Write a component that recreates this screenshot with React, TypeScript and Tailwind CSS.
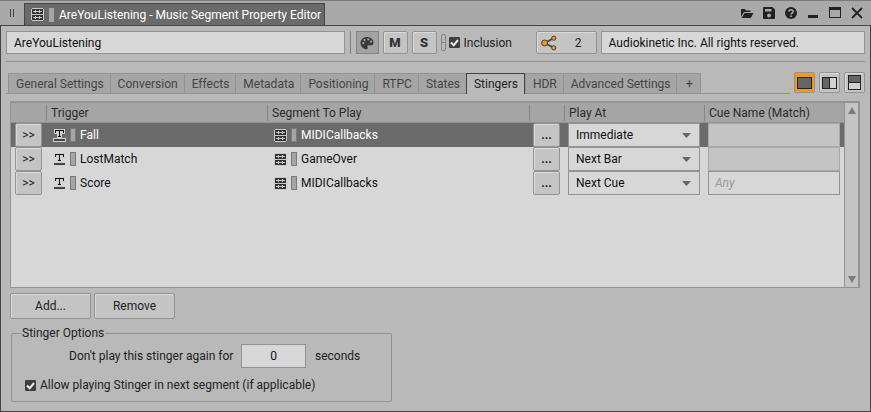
import type { InputHTMLAttributes, ReactNode } from "react";

type Stinger = {
  trigger: string;
  segment: string;
  playAt: string;
  cue?: string;
  selected?: boolean;
};

const stingers: Stinger[] = [
  { trigger: "Fall", segment: "MIDICallbacks", playAt: "Immediate", selected: true },
  { trigger: "LostMatch", segment: "GameOver", playAt: "Next Bar" },
  { trigger: "Score", segment: "MIDICallbacks", playAt: "Next Cue", cue: "Any" },
];

const tabs = [
  "General Settings",
  "Conversion",
  "Effects",
  "Metadata",
  "Positioning",
  "RTPC",
  "States",
  "Stingers",
  "HDR",
  "Advanced Settings",
  "+",
];

const playAtOptions = ["Immediate", "Next Grid", "Next Bar", "Next Beat", "Next Cue"];

const raised =
  "flex items-center justify-center rounded-xs border border-[#939393] bg-[#c4c4c4] shadow-[inset_1px_1px_0_#dadada]";

const field = "border border-[#939393] bg-[#d7d7d7] text-[#111] outline-none";

const SegmentIcon = () => (
  <svg width="13" height="13" viewBox="0 0 13 13" shapeRendering="crispEdges" className="shrink-0">
    <path d="M1 0h11v1h1v11h-1v1H1v-1H0V1h1z" fill="#c8c8c8" />
    <path d="M1 1h11v5H1zM1 7h11v5H1z" fill="#333" />
    <path
      d="M2 3h9v1H2zM4 2h1v3H4zM8 2h1v3H8zM2 9h9v1H2zM4 8h1v3H4zM8 8h1v3H8z"
      fill="#c8c8c8"
    />
  </svg>
);

const TriggerIcon = () => (
  <svg width="13" height="14" viewBox="0 0 13 14" shapeRendering="crispEdges" className="shrink-0">
    <path d="M1 1h11v5H9v4h4v4H0v-4h4V6H1z" fill="#d0d0d0" />
    <path d="M2 2h9v3h-1V3H7v5h1v1H5V8h1V3H3v2H2z" fill="#111" />
    <path d="M1 11h11v2H1z" fill="#444" />
  </svg>
);

const ColorChip = () => (
  <span className="h-[14px] w-[6px] shrink-0 border border-[#7b7b7b] bg-[#a5a5a5]" />
);

const ShareIcon = () => (
  <svg width="16" height="16" viewBox="0 0 16 16" className="shrink-0">
    <path d="M13 3 4 8l9 5" fill="none" stroke="#444" strokeWidth="1.8" />
    <g fill="#f09a1a" stroke="#4a4030" strokeWidth="1">
      <circle cx="3.6" cy="8" r="3" />
      <circle cx="12.8" cy="3.2" r="2.1" />
      <circle cx="12.8" cy="12.8" r="2.1" />
    </g>
  </svg>
);

const PaletteIcon = () => (
  <svg width="14" height="14" viewBox="0 0 14 14">
    <path
      fillRule="evenodd"
      fill="#3a3a3a"
      d="M7 1C3.300 1 .5 3.700 .5 7s2.800 6.300 6 6.300c1.100 0 1.500-.8 1.100-1.700C7 10.300 7.600 9.300 9 9.300h2.200c1.500 0 2.300-1 2.300-2.400C13.500 3.500 10.700 1 7 1zM3.300 6a1.100 1.100 0 1 0 0 2.200 1.100 1.100 0 0 0 0-2.200zM4.600 3a1.100 1.100 0 1 0 0 2.200 1.100 1.100 0 0 0 0-2.200zM8.200 2.200a1.100 1.100 0 1 0 0 2.200 1.100 1.100 0 0 0 0-2.200zM11 4.600a1.100 1.100 0 1 0 0 2.200 1.100 1.100 0 0 0 0-2.200z"
    />
  </svg>
);

const WindowButton = ({ label, children }: { label: string; children: ReactNode }) => (
  <button type="button" aria-label={label} className="flex size-[22px] items-center justify-center">
    <svg width="14" height="14" viewBox="0 0 14 14" fill="#222">
      {children}
    </svg>
  </button>
);

const Checkbox = (props: InputHTMLAttributes<HTMLInputElement>) => (
  <span className="grid shrink-0">
    <input
      type="checkbox"
      {...props}
      className="col-start-1 row-start-1 size-[11px] appearance-none rounded-[1px] bg-[#3f3f3f]"
    />
    <svg
      width="11"
      height="11"
      viewBox="0 0 11 11"
      className="pointer-events-none col-start-1 row-start-1"
    >
      <path d="M2 5.500 4.700 8.300 9 3" fill="none" stroke="#eee" strokeWidth="2" />
    </svg>
  </span>
);

const ToggleButton = ({ label, children }: { label: string; children: string }) => (
  <button
    type="button"
    aria-label={label}
    className={`${raised} h-[23px] w-[25px] text-[13px] font-black text-[#333]`}
  >
    {children}
  </button>
);

const Head = ({ children }: { children?: ReactNode }) => (
  <th className="h-5 border-b border-[#939393] bg-[#a5a5a5] p-0 text-left font-normal text-[#2b2b2b]">
    <div className="flex h-4 items-center border-l border-[#858585] pl-1">{children}</div>
  </th>
);

const Row = ({ trigger, segment, playAt, cue, selected }: Stinger) => (
  <tr className={selected ? "h-6 bg-[#6b6b6b] text-white" : "h-6 text-[#111]"}>
    <td className="p-0 pl-1">
      <button type="button" aria-label={`${trigger} menu`} className={`${raised} h-6 w-[27px] text-[#222]`}>
        &gt;&gt;
      </button>
    </td>
    <td className="p-0 pl-[7px]">
      <div className="flex items-center gap-1">
        <TriggerIcon />
        <ColorChip />
        <span>{trigger}</span>
      </div>
    </td>
    <td className="p-0 pl-[7px]">
      <div className="flex items-center gap-1">
        <SegmentIcon />
        <ColorChip />
        <span>{segment}</span>
      </div>
    </td>
    <td className="p-0 pl-1">
      <button
        type="button"
        aria-label={`Browse segment for ${trigger}`}
        className={`${raised} h-6 w-[27px] font-bold text-[#222]`}
      >
        ...
      </button>
    </td>
    <td className="p-0 pl-1">
      <div className="grid w-[132px] items-center">
        <select
          aria-label={`Play ${trigger} at`}
          defaultValue={playAt}
          className={`${field} col-start-1 row-start-1 h-6 appearance-none px-[7px]`}
        >
          {playAtOptions.map((option) => (
            <option key={option}>{option}</option>
          ))}
        </select>
        <svg
          width="9"
          height="5"
          viewBox="0 0 9 5"
          className="pointer-events-none col-start-1 row-start-1 mr-[9px] justify-self-end"
        >
          <path d="M0 0h9L4.500 5z" fill="#666" />
        </svg>
      </div>
    </td>
    <td className="p-0 pl-1">
      <input
        aria-label={`Cue name for ${trigger}`}
        placeholder={cue}
        disabled={!cue}
        className="block h-6 w-[132px] border border-[#939393] bg-[#d7d7d7] px-1.5 placeholder:text-[#999] placeholder:italic disabled:border-[#a9a9a9] disabled:bg-[#c4c4c4]"
      />
    </td>
  </tr>
);

const TitleBar = () => (
  <header className="flex h-[26px] items-end justify-between border-t border-b border-t-[#7b7b7b] border-b-[#444] bg-[#a9a9a9]">
    <div className="flex items-end">
      <div className="flex h-6 w-6 items-center gap-[2px] pl-[10px]">
        <span className="h-2 w-px bg-[#444]" />
        <span className="h-2 w-px bg-[#444]" />
      </div>
      <h1 className="flex h-[22px] w-[301px] items-center gap-[5px] border-x border-t border-[#444] bg-[#6a6a6a] pl-1.5 whitespace-nowrap text-white">
        <SegmentIcon />
        <span className="h-[14px] w-[5px] shrink-0 bg-[#a5a5a5]" />
        <span>AreYouListening - Music Segment Property Editor</span>
      </h1>
    </div>
    <div className="flex pr-[3px] pb-px">
      <WindowButton label="Open">
        <path d="M1 3h4l1 1.500h4.500V6H4L1 10.500zM4.600 7H13.500L10.800 12H1.500z" />
      </WindowButton>
      <WindowButton label="Save">
        <path
          fillRule="evenodd"
          d="M2 1h8.500L13 3.500V12a1 1 0 0 1-1 1H2a1 1 0 0 1-1-1V2a1 1 0 0 1 1-1zM3 3v2.500h6.500V3zM7 7.500a2 2 0 1 0 0 4 2 2 0 0 0 0-4z"
        />
      </WindowButton>
      <WindowButton label="Help">
        <circle cx="7" cy="7" r="6" />
        <path d="M5 5.800C5 3.200 9.100 3.300 9.100 5.600 9.100 7 7.100 7.100 7.100 8.600" fill="none" stroke="#aaa" strokeWidth="1.500" />
        <path d="M6.300 9.600h1.600v1.500H6.300z" fill="#aaa" />
      </WindowButton>
      <WindowButton label="Minimize">
        <path d="M2 9h10v3H2z" />
      </WindowButton>
      <WindowButton label="Maximize">
        <path fillRule="evenodd" d="M1 1h12v11H1zM2 4v7h10V4z" />
      </WindowButton>
      <WindowButton label="Close">
        <path d="M2 2l10 10M12 2l-10 10" stroke="#222" strokeWidth="1.800" />
      </WindowButton>
    </div>
  </header>
);

const Toolbar = () => (
  <div className="mx-[5px] flex items-center border-b border-[#939393] pt-[5px] pb-[7px]">
    <input aria-label="Name" defaultValue="AreYouListening" className={`${field} h-[23px] min-w-0 flex-[322] px-[7px]`} />
    <span className="mx-[5px] h-[23px] w-px bg-[#7f7f7f]" />
    <button
      type="button"
      aria-label="Color"
      className="mr-1 flex h-[23px] w-[23px] items-center justify-center border border-[#858585] bg-[#a2a2a2]"
    >
      <PaletteIcon />
    </button>
    <div className="flex gap-1">
      <ToggleButton label="Mute">M</ToggleButton>
      <ToggleButton label="Solo">S</ToggleButton>
    </div>
    <span className="mr-[3px] ml-1 flex h-[17px] w-[5px] flex-col justify-center rounded-xs border border-[#858585]">
      <span className="h-px bg-[#858585]" />
    </span>
    <label className="flex w-[87px] items-center gap-1 text-[#222]">
      <Checkbox defaultChecked />
      Inclusion
    </label>
    <button type="button" aria-label="References" className={`${raised} h-[23px] w-[61px] justify-start pl-1 text-[#222]`}>
      <ShareIcon />
      <span className="flex-1 pl-1">2</span>
    </button>
    <input
      aria-label="Notes"
      defaultValue="Audiokinetic Inc. All rights reserved."
      className={`${field} ml-1 h-[23px] min-w-0 flex-[248] px-[7px]`}
    />
  </div>
);

const TabBar = () => (
  <div className="flex items-end justify-between px-[5px] pt-[10px]">
    <div role="tablist" className="mr-1 flex flex-1 border-b border-[#939393] pl-[2px]">
      {tabs.map((tab) => (
        <button
          key={tab}
          type="button"
          role="tab"
          aria-selected={tab === "Stingers"}
          className={
            tab === "Stingers"
              ? "-mb-px h-[21px] border-x border-t border-[#444] bg-[#b9b9b9] pr-1.5 pl-[7px] text-[#222]"
              : "h-5 border-t border-l border-[#939393] bg-[#a5a5a5] pr-1.5 pl-[7px] text-[#444] last:w-[25px] last:border-r"
          }
        >
          {tab}
        </button>
      ))}
    </div>
    <div className="mb-px flex gap-1">
      <button
        type="button"
        aria-label="Single view"
        className="flex size-[21px] items-center justify-center rounded-xs border border-[#939393] bg-[#f39c12]"
      >
        <span className="h-3 w-[15px] border border-[#222] bg-[#666]" />
      </button>
      <button type="button" aria-label="Split vertically" className={`${raised} size-[21px]`}>
        <span className="flex h-3 w-[15px] border border-[#222]">
          <span className="flex-1 border-r border-[#222] bg-[#666]" />
          <span className="w-[6px] bg-[#d0d0d0]" />
        </span>
      </button>
      <button type="button" aria-label="Split horizontally" className={`${raised} size-[21px]`}>
        <span className="flex h-[15px] w-[13px] flex-col border border-[#222]">
          <span className="flex-1 border-b border-[#222] bg-[#666]" />
          <span className="h-[6px] bg-[#d0d0d0]" />
        </span>
      </button>
    </div>
  </div>
);

const StingerList = () => (
  <div className="mt-[7px] mr-[10px] ml-[9px] flex min-h-[187px] border-t-2 border-r-2 border-b border-l border-[#939393] bg-[#d7d7d7]">
    <div className="flex-1">
      <table className="w-full table-fixed border-separate border-spacing-0">
        <colgroup>
          <col className="w-[35px]" />
          <col className="w-[221px]" />
          <col />
          <col className="w-[35px]" />
          <col className="w-[140px]" />
          <col className="w-[140px]" />
        </colgroup>
        <thead>
          <tr>
            <th className="border-b border-[#939393] bg-[#a5a5a5] p-0" />
            <Head>Trigger</Head>
            <Head>Segment To Play</Head>
            <Head />
            <Head>Play At</Head>
            <Head>Cue Name (Match)</Head>
          </tr>
        </thead>
        <tbody>
          {stingers.map((stinger) => (
            <Row key={stinger.trigger} {...stinger} />
          ))}
        </tbody>
      </table>
    </div>
    <div className="flex w-[14px] flex-col items-center justify-between border-l border-[#939393] bg-[#c4c4c4] py-1">
      <svg width="8" height="7" viewBox="0 0 8 7">
        <path d="M4 0l4 7H0z" fill="#7b7b7b" />
      </svg>
      <svg width="8" height="7" viewBox="0 0 8 7">
        <path d="M0 0h8L4 7z" fill="#7b7b7b" />
      </svg>
    </div>
  </div>
);

const StingerOptions = () => (
  <fieldset className="mt-[6px] ml-[10px] w-[381px] rounded-xs border border-[#939393] px-[13px] pb-2 text-[#222]">
    <legend className="-ml-1 px-px leading-4">Stinger Options</legend>
    <div className="flex items-center pt-[3px] pl-11 whitespace-nowrap">
      <label htmlFor="cooldown" className="w-[172px]">
        Don't play this stinger again for
      </label>
      <input id="cooldown" defaultValue="0" className={`${field} h-6 w-[65px] text-center`} />
      <span className="pl-[9px]">seconds</span>
    </div>
    <label className="flex items-center gap-1 pt-[9px]">
      <Checkbox defaultChecked />
      Allow playing Stinger in next segment (if applicable)
    </label>
  </fieldset>
);

export default function App() {
  return (
    <div className="flex min-h-screen flex-col bg-[#b9b9b9] font-['Roboto',sans-serif] text-xs">
      <TitleBar />
      <main className="flex-1 border-x border-b border-[#444]">
        <Toolbar />
        <TabBar />
        <StingerList />
        <div className="mt-[5px] ml-[9px] flex gap-[3px] text-[#222]">
          <button type="button" className={`${raised} h-[26px] w-[81px]`}>
            Add...
          </button>
          <button type="button" className={`${raised} h-[26px] w-[81px]`}>
            Remove
          </button>
        </div>
        <StingerOptions />
      </main>
    </div>
  );
}
